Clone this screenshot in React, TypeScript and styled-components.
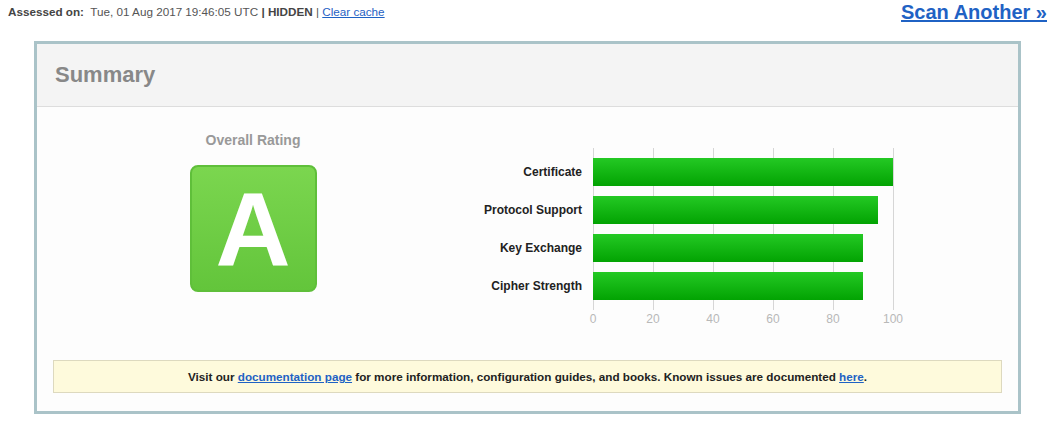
import styled, { createGlobalStyle } from "styled-components";

const GlobalStyle = createGlobalStyle`
    html, body {
        margin: 0;
        padding: 0;
        background: #ffffff;
        font-family: "Liberation Sans", Arial, sans-serif;
    }
`

const ratings = [
    {title: 'Certificate', value: 100},
    {title: 'Protocol Support', value: 95},
    {title: 'Key Exchange', value: 90},
    {title: 'Cipher Strength', value: 90},
]

const ticks = [0, 20, 40, 60, 80, 100]

const PLOT_WIDTH = 300

const App: React.FC = () => {
    return (
        <Page>
            <GlobalStyle />
            <TopBar>
                <Assessed>
                    <b>Assessed on:</b>&nbsp; Tue, 01 Aug 2017 19:46:05 UTC <Strong>| HIDDEN</Strong> | <a href="#">Clear cache</a>
                </Assessed>
                <ScanLink href="#">Scan Another &raquo;</ScanLink>
            </TopBar>

            <Panel>
                <PanelHeader>Summary</PanelHeader>
                <PanelBody>
                    <TopRow>
                        <RatingColumn>
                            <RatingTitle>Overall Rating</RatingTitle>
                            <Grade>A</Grade>
                        </RatingColumn>

                        <Chart>
                            <Labels>
                                {ratings.map(r => <Label key={r.title}>{r.title}</Label>)}
                            </Labels>
                            <PlotWrap>
                                <Plot>
                                    {ticks.map(t =>
                                        <GridLine key={t} style={{left: (t / 100) * PLOT_WIDTH}} />
                                    )}
                                    {ratings.map(r =>
                                        <BarRow key={r.title}>
                                            <Bar style={{width: (r.value / 100) * PLOT_WIDTH}} />
                                        </BarRow>
                                    )}
                                </Plot>
                                <Axis>
                                    {ticks.map(t =>
                                        <Tick key={t} style={{left: (t / 100) * PLOT_WIDTH}}>{t}</Tick>
                                    )}
                                </Axis>
                            </PlotWrap>
                        </Chart>
                    </TopRow>

                    <Notice>
                        Visit our <a href="#">documentation page</a> for more information, configuration guides, and books. Known issues are documented <a href="#">here</a>.
                    </Notice>
                </PanelBody>
            </Panel>
        </Page>
    )
}

const Page = styled.div`
    width: 1055px;
    height: 426px;
    overflow: hidden;
`

const TopBar = styled.div`
    display: flex;
    justify-content: space-between;
    align-items: flex-start;
    padding: 0 8px;
    height: 41px;
`

const Assessed = styled.div`
    font-size: 11.7px;
    color: #555555;
    padding-top: 5px;

    & > b {
        color: #444444;
    }
    & > a {
        color: #1f62c4;
    }
`

const Strong = styled.b`
    color: #222222;
`

const ScanLink = styled.a`
    font-size: 20px;
    font-weight: bold;
    color: #1f62c4;
    text-decoration: underline;
    padding-top: 1px;
`

const Panel = styled.div`
    margin: 0 34px;
    height: 373px;
    box-sizing: border-box;
    border: 3px solid #aac3c8;
    background: #fdfdfd;
    display: flex;
    flex-direction: column;
`

const PanelHeader = styled.div`
    height: 63px;
    box-sizing: border-box;
    background: #f4f4f4;
    border-bottom: 1px solid #dddddd;
    padding-left: 18px;
    display: flex;
    align-items: center;
    font-size: 22px;
    font-weight: bold;
    color: #888888;
`

const PanelBody = styled.div`
    padding: 0 16px;
`

const TopRow = styled.div`
    display: flex;
`

const RatingColumn = styled.div`
    margin-left: 100px;
    width: 200px;
    padding-top: 25px;
    display: flex;
    flex-direction: column;
    align-items: center;
`

const RatingTitle = styled.div`
    font-size: 14px;
    line-height: 17px;
    font-weight: bold;
    color: #999999;
`

const Grade = styled.div`
    margin-top: 16px;
    width: 127px;
    height: 127px;
    box-sizing: border-box;
    border: 2px solid #5fbf3a;
    border-radius: 8px;
    background: linear-gradient(#7bd64f, #63c53b);
    color: #ffffff;
    font-size: 104px;
    font-weight: bold;
    display: flex;
    align-items: center;
    justify-content: center;
    line-height: 1;
`

const Chart = styled.div`
    margin-left: 89px;
    padding-top: 41px;
    display: flex;
`

const Labels = styled.div`
    width: 140px;
    padding: 10px 11px 0 0;
    display: flex;
    flex-direction: column;
    gap: 10px;
`

const Label = styled.div`
    height: 28px;
    line-height: 28px;
    text-align: right;
    font-size: 12px;
    font-weight: bold;
    color: #222222;
    white-space: nowrap;
`

const PlotWrap = styled.div`
    width: 300px;
`

const Plot = styled.div`
    position: relative;
    padding: 10px 0;
    display: flex;
    flex-direction: column;
    gap: 10px;
`

const GridLine = styled.div`
    position: absolute;
    top: 0;
    bottom: 0;
    width: 1px;
    background: #d6d6d6;
`

const BarRow = styled.div`
    position: relative;
    height: 28px;
`

const Bar = styled.div`
    height: 100%;
    background: linear-gradient(#24c924, #02a302);
`

const Axis = styled.div`
    position: relative;
    height: 16px;
    margin-top: 2px;
`

const Tick = styled.span`
    position: absolute;
    top: 0;
    transform: translateX(-50%);
    font-size: 12px;
    color: #b8b8b8;
`

const Notice = styled.div`
    margin-top: 32px;
    height: 33px;
    box-sizing: border-box;
    border: 1px solid #ddd9bf;
    background: #fefadc;
    text-align: center;
    line-height: 31px;
    font-size: 11.7px;
    font-weight: bold;
    color: #222222;

    & > a {
        color: #1f62c4;
    }
`

export default App;
